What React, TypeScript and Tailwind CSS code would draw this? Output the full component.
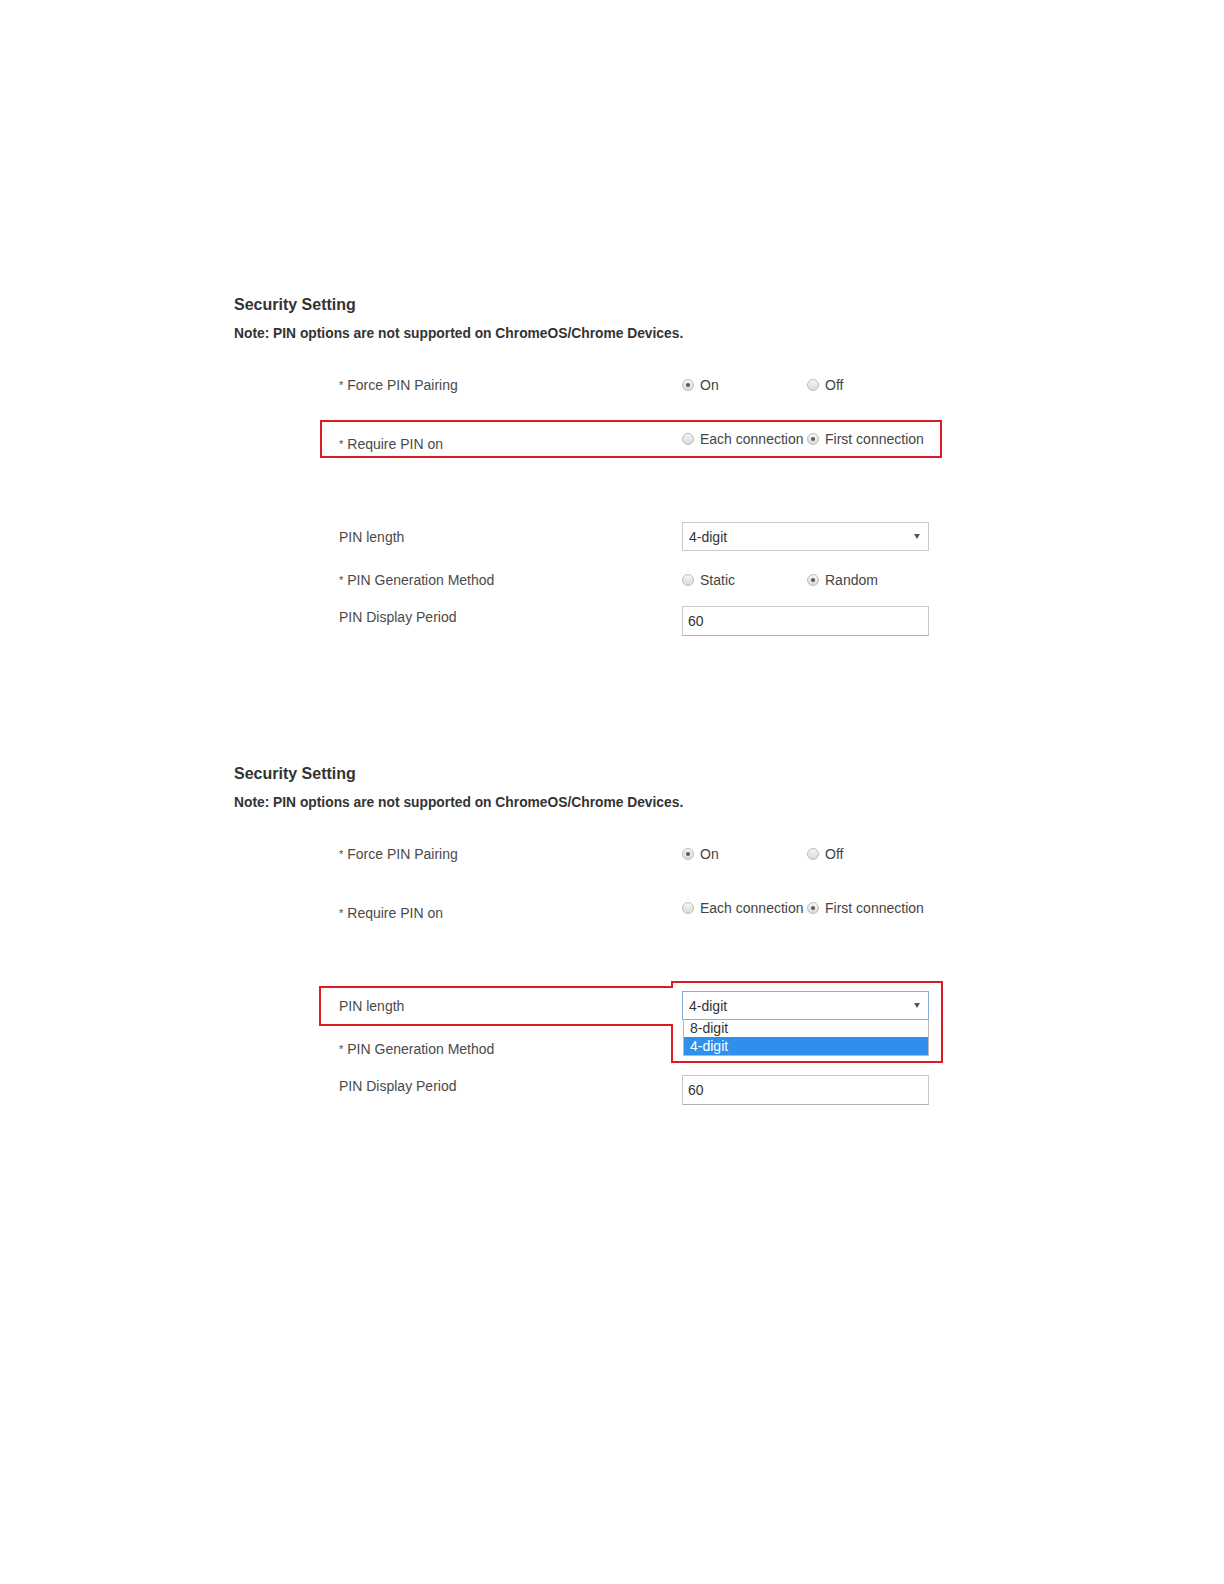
import React from 'react';

/**
 * Two copies of the "Security Setting" panel as shown in the docs screenshot:
 * the first highlights "Require PIN on", the second shows the PIN length
 * dropdown opened, with the annotation outline around it.
 */

const Radio: React.FC<{ checked?: boolean; label?: string }> = ({ checked, label }) => (
  <div className="flex items-center gap-[6px] w-[125px] shrink-0">
    <span className="w-[12px] h-[12px] rounded-full border border-[#bcbcbc] bg-gradient-to-b from-[#f6f6f6] to-[#dadada] flex items-center justify-center shrink-0">
      {checked && <span className="w-[4px] h-[4px] rounded-full bg-[#5a5a5a]" />}
    </span>
    {label && <span className="text-[14px] leading-[18px] text-[#444] whitespace-nowrap">{label}</span>}
  </div>
);

const Caret: React.FC = () => (
  <svg width="6" height="5" viewBox="0 0 6 5" className="shrink-0">
    <path d="M0 0h6L3 5z" fill="#555" />
  </svg>
);

const Label: React.FC<{ text: string; required?: boolean; className?: string }> = ({ text, required, className = '' }) => (
  <div className={`w-[343px] shrink-0 text-[14px] leading-[18px] text-[#4a4a4a] ${className}`}>
    {required && <span className="text-[11px] mr-[4px] align-top">*</span>}
    {text}
  </div>
);

const Section: React.FC<{ variant: 'require' | 'length' }> = ({ variant }) => {
  const open = variant === 'length';
  return (
    <div className="pl-[234px]">
      <h2 className="h-[20px] text-[16px] leading-[20px] font-bold text-[#333]">Security Setting</h2>
      <p className="mt-[10px] h-[18px] text-[13.8px] leading-[18px] font-bold text-[#333]">
        Note: PIN options are not supported on ChromeOS/Chrome Devices.
      </p>

      <div className="ml-[86px] w-[622px]">
        {/* Force PIN Pairing */}
        <div className="mt-[27px] h-[30px] pl-[19px] flex items-center">
          <Label text="Force PIN Pairing" required />
          <Radio checked label="On" />
          <Radio label="Off" />
        </div>

        {/* Require PIN on */}
        <div
          className={`mt-[20px] h-[38px] pl-[17px] flex items-center border-2 ${
            variant === 'require' ? 'border-[#dc1c24]' : 'border-transparent'
          }`}
        >
          <Label text="Require PIN on" required className="pt-[10px]" />
          <Radio label="Each connection" />
          <Radio checked label="First connection" />
        </div>

        {/* PIN length */}
        <div className="relative mt-[64px] h-[29px] pl-[19px] flex items-center">
          <Label text="PIN length" />
          <div
            className={`relative w-[247px] h-[29px] border flex items-center justify-between pl-[6px] pr-[8px] bg-white ${
              open ? 'border-[#86aedd]' : 'border-[#c9c9c9]'
            }`}
          >
            <span className="text-[14px] leading-[18px] text-[#333]">4-digit</span>
            <Caret />
            {open && (
              <div className="absolute z-10 left-0 top-[28px] w-[246px] bg-white border-x border-b border-[#b9b9b9]">
                <div className="h-[17px] pl-[6px] text-[14px] leading-[17px] text-[#333]">8-digit</div>
                <div className="h-[18px] pl-[6px] text-[14px] leading-[18px] text-white bg-[#2f8fec]">4-digit</div>
              </div>
            )}
          </div>
          {open && (
            <svg
              className="absolute left-[-1px] top-[-10px] z-20 pointer-events-none"
              width="625"
              height="83"
              viewBox="0 0 625 83"
              fill="none"
            >
              <path d="M1 6H353V1H623V81H353V44H1Z" stroke="#dc1c24" strokeWidth="2" />
            </svg>
          )}
        </div>

        {/* PIN Generation Method — its radios sit under the open list */}
        <div className="mt-[19px] h-[20px] pl-[19px] flex items-center">
          <Label text="PIN Generation Method" required />
          <div className={`flex ${open ? 'invisible' : ''}`}>
            <Radio label="Static" />
            <Radio checked label="Random" />
          </div>
        </div>

        {/* PIN Display Period */}
        <div className="mt-[16px] h-[30px] pl-[19px] flex items-center">
          <Label text="PIN Display Period" className="mb-[8px]" />
          <div className="w-[247px] h-[30px] border border-[#c9c9c9] border-b-[#b0b0b0] flex items-center pl-[5px] text-[14px] text-[#333]">
            60
          </div>
        </div>
      </div>
    </div>
  );
};

export default function App() {
  return (
    <div className="min-h-[1584px] bg-white pt-[295px] font-['Liberation_Sans',Arial,sans-serif]">
      <Section variant="require" />
      <div className="h-[128px]" />
      <Section variant="length" />
    </div>
  );
}
